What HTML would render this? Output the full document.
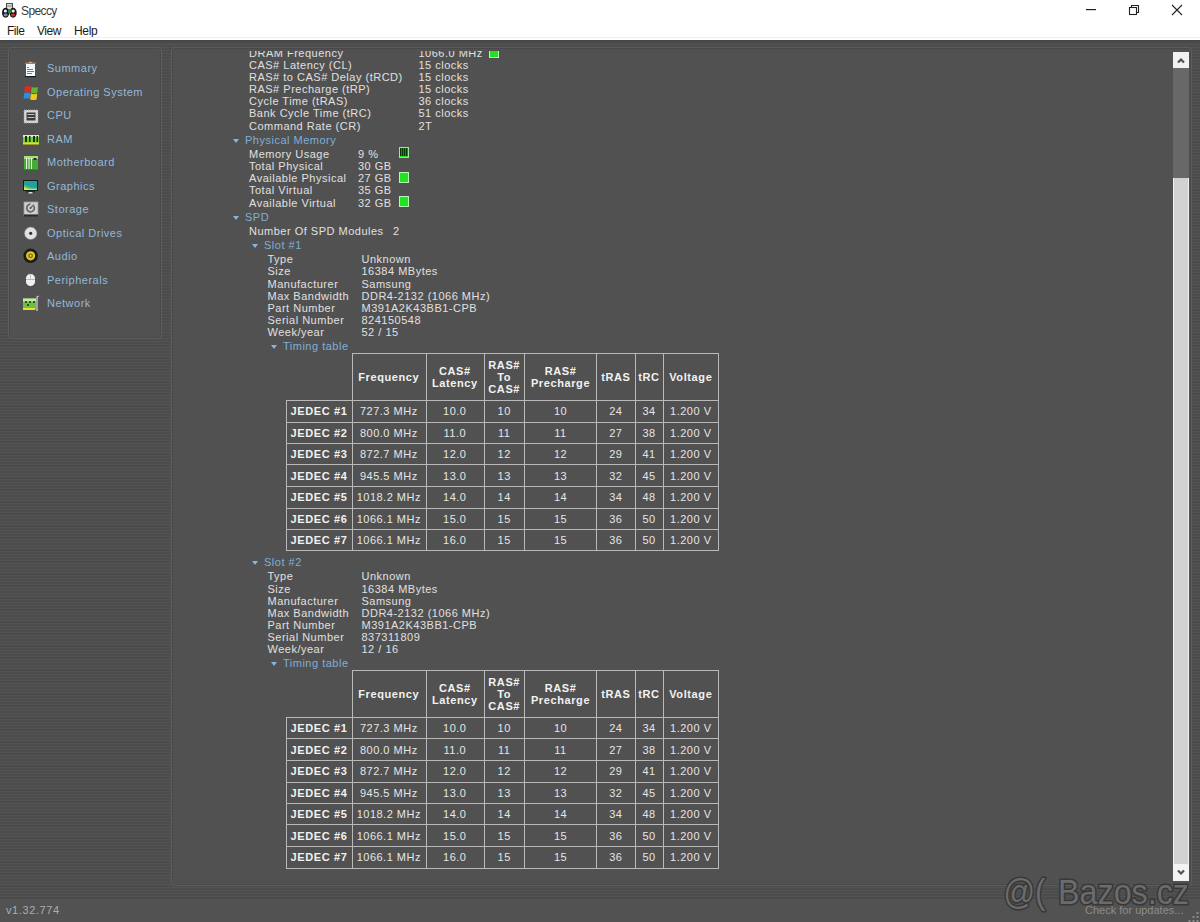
<!DOCTYPE html>
<html><head><meta charset="utf-8"><style>
*{margin:0;padding:0;box-sizing:border-box}
html,body{width:1200px;height:922px;overflow:hidden}
body{position:relative;font-family:"Liberation Sans", sans-serif;background:repeating-linear-gradient(180deg,#4c4c4c 0px,#4c4c4c 2px,#535353 2px,#535353 3px)}
.abs{position:absolute}
#title{position:absolute;left:0;top:0;width:1200px;height:40px;background:#fff}
#band{position:absolute;left:0;top:40px;width:1200px;height:2px;background:#474747}
.panel{position:absolute;background:#515151;border:1px solid #5d5d5d;border-radius:4px;box-shadow:inset 1px 1px 0 #494949, inset -1px -1px 0 #494949}
#clip{position:absolute;left:173px;top:51px;width:999px;height:832px;overflow:hidden}
#inner{position:absolute;left:-173px;top:-51px;width:1200px;height:922px}
.t,.h,.nv,.th,.td{position:absolute;font-size:11px;line-height:11px;white-space:nowrap;letter-spacing:0.5px}
.t{color:#e0e0e0}
.h{color:#80aed6}
.nv{color:#94b8d8;letter-spacing:0.5px}
.th{color:#f2f2f2;font-weight:bold;width:120px;text-align:center;letter-spacing:0.6px}
.td{color:#e6e6e6;width:120px;text-align:center}
.td.b{font-weight:bold;color:#f2f2f2;letter-spacing:0.6px}
.arr{position:absolute;width:0;height:0;border-left:3.5px solid transparent;border-right:3.5px solid transparent;border-top:4px solid #86b6de}
.gbox{position:absolute;width:10px;background:#22e322;border:1px solid #b8f5b8}
.gbox.u{background:repeating-linear-gradient(90deg,#063806 0,#063806 1px,#1a8a1a 1px,#1a8a1a 2px);border-color:#9de89d;box-shadow:inset 0 -1px 0 #22e322}
.tbl{position:absolute}
#status{position:absolute;left:0;top:898px;width:1200px;height:24px;background:#525252;border-top:1px solid #4a4a4a}
</style></head><body>
<div id="title"></div>
<div class="abs" style="left:21px;top:4px;font-size:12px;line-height:14px;color:#3a3a3a;letter-spacing:-0.6px">Speccy</div>
<div class="abs" style="left:7px;top:24px;font-size:12px;line-height:14px;color:#1a1a1a;letter-spacing:-0.5px">File</div>
<div class="abs" style="left:37px;top:24px;font-size:12px;line-height:14px;color:#1a1a1a;letter-spacing:-0.5px">View</div>
<div class="abs" style="left:74px;top:24px;font-size:12px;line-height:14px;color:#1a1a1a;letter-spacing:-0.3px">Help</div>
<svg class="abs" style="left:0;top:0" width="20" height="20" viewBox="0 0 20 20">
 <rect x="6.5" y="3.5" width="6" height="8" fill="#dcdcdc" stroke="#505050" stroke-width="1"/>
 <rect x="7" y="5.5" width="5" height="1" fill="#808080"/>
 <ellipse cx="5.6" cy="12.7" rx="3.6" ry="5" fill="#15151c"/>
 <ellipse cx="13.1" cy="12.7" rx="3.6" ry="5" fill="#1a1414"/>
 <ellipse cx="5.4" cy="11" rx="1.6" ry="1.6" fill="#e8eef8"/>
 <ellipse cx="5.6" cy="15" rx="2" ry="1.4" fill="#8090b8"/>
 <ellipse cx="13.2" cy="11" rx="1.6" ry="1.6" fill="#f0f0f0"/>
 <ellipse cx="13.1" cy="15" rx="2.2" ry="1.5" fill="#d02828"/>
 <rect x="8" y="9" width="3.5" height="4" fill="#3c7a3c"/>
</svg>
<svg class="abs" style="left:1080px;top:0" width="120" height="20">
 <rect x="6" y="9" width="10" height="1.2" fill="#222"/>
 <rect x="49.5" y="7.5" width="7" height="7" fill="none" stroke="#222" stroke-width="1.1"/>
 <path d="M51.5 7.5 V5.5 H58.5 V12.5 H56.5" fill="none" stroke="#222" stroke-width="1.1"/>
 <path d="M92 5 L102 15 M102 5 L92 15" stroke="#222" stroke-width="1.1"/>
</svg>
<div class="panel" style="left:8px;top:47px;width:154px;height:292px"></div>
<div class="panel" style="left:171px;top:47px;width:1021px;height:839px"></div>
<div class="nv" style="left:47px;top:63.2px">Summary</div><div class="nv" style="left:47px;top:86.7px">Operating System</div><div class="nv" style="left:47px;top:110.2px">CPU</div><div class="nv" style="left:47px;top:133.7px">RAM</div><div class="nv" style="left:47px;top:157.2px">Motherboard</div><div class="nv" style="left:47px;top:180.7px">Graphics</div><div class="nv" style="left:47px;top:204.2px">Storage</div><div class="nv" style="left:47px;top:227.7px">Optical Drives</div><div class="nv" style="left:47px;top:251.2px">Audio</div><div class="nv" style="left:47px;top:274.7px">Peripherals</div><div class="nv" style="left:47px;top:298.2px">Network</div>

<svg class="abs" style="left:0;top:0" width="45" height="320">
 <!-- summary clipboard -->
 <rect x="25.5" y="63.5" width="10" height="13" fill="#f4fbff" stroke="#6a4a30" stroke-width="1"/>
 <path d="M28 63 L30.5 61.5 L33 63 Z" fill="#e0e0e0"/>
 <rect x="25" y="62.5" width="11" height="1.5" fill="#b07a50"/>
 <rect x="27" y="67" width="2" height="1" fill="#3a8ad8"/>
 <rect x="27" y="69" width="6" height="1" fill="#3a8ad8"/>
 <rect x="27" y="71" width="7" height="1" fill="#3a8ad8"/>
 <rect x="27" y="73" width="5" height="1" fill="#3a8ad8"/>
 <rect x="25" y="76" width="11" height="1.2" fill="#1a1a1a"/>
 <!-- windows flag -->
 <path d="M25 86.5 Q27.5 85.3 30.8 86.6 L30.3 92.3 Q27.5 91.2 24.3 92.3 Z" fill="#e8281e"/>
 <path d="M31.6 87 Q34.5 88.2 38 87 L37.3 92.8 Q34.5 94 30.9 92.8 Z" fill="#5eb532"/>
 <path d="M24.2 93 Q27.3 91.9 30.2 93 L29.7 98.8 Q27 97.6 23.6 98.8 Z" fill="#2c8ee0"/>
 <path d="M30.8 93.6 Q34.3 94.8 37.2 93.6 L36.6 99.5 Q34 100.6 30.2 99.4 Z" fill="#f2c81e"/>
 <!-- cpu -->
 <rect x="24" y="110" width="14" height="13" fill="#d8d8d8"/>
 <rect x="24" y="110" width="14" height="13" fill="none" stroke="#9a9a9a" stroke-width="1" stroke-dasharray="1 1"/>
 <rect x="26.5" y="112.5" width="9" height="8" fill="#3a3a3a"/>
 <rect x="27.5" y="114" width="7" height="1" fill="#c0c0c0"/>
 <rect x="27.5" y="117" width="7" height="1" fill="#c0c0c0"/>
 <!-- ram -->
 <rect x="23" y="135" width="16" height="8" fill="#7acb3c"/>
 <rect x="23" y="135" width="16" height="2" fill="#d8efc0"/>
 <rect x="25" y="136" width="2" height="6" fill="#0c3a0c"/>
 <rect x="29" y="136" width="1.5" height="6" fill="#0c3a0c"/>
 <rect x="33" y="136" width="2" height="6" fill="#0c3a0c"/>
 <rect x="36.5" y="136" width="1.5" height="6" fill="#0c3a0c"/>
 <rect x="23" y="142.5" width="16" height="2" fill="#e8e010"/>
 <!-- motherboard -->
 <rect x="24" y="156" width="14" height="15" fill="#48a838"/>
 <rect x="24" y="156" width="14" height="3" fill="#a8dc88"/>
 <rect x="26" y="158" width="1" height="11" fill="#e8f8e0"/>
 <rect x="28.5" y="158" width="1" height="11" fill="#e8f8e0"/>
 <rect x="31" y="158" width="1" height="11" fill="#e8f8e0"/>
 <rect x="33.5" y="158" width="3" height="2" fill="#183818"/>
 <rect x="24" y="169.5" width="14" height="1.5" fill="#2a6a2a"/>
 <!-- graphics -->
 <rect x="23" y="180" width="15" height="11" fill="#102018"/>
 <rect x="24" y="181" width="13" height="9" fill="#22a0a0"/>
 <path d="M24 190 L24 186.5 Q28 189.5 37 188.5 L37 190 Z" fill="#d8e850"/><path d="M24 186.5 Q28 189.5 37 188.5 L37 187.5 Q30 188.5 24 184.5 Z" fill="#58c070"/>
 <rect x="26" y="191" width="9" height="1.5" fill="#2a2a2a"/><rect x="28.5" y="192" width="4" height="1.5" fill="#d8d8d8"/>
 <!-- storage -->
 <rect x="24" y="202" width="14" height="13" fill="#d0d0d0" stroke="#9a9a9a" stroke-width="0.8"/>
 <path d="M33.8 206 A3.8 3.8 0 1 1 30.5 204.2" fill="none" stroke="#6a6a6a" stroke-width="1.8"/><path d="M30.5 208 L34 204.5" stroke="#6a6a6a" stroke-width="1.2"/>
 <circle cx="30.5" cy="208" r="1" fill="#505050"/>
 <rect x="24" y="214.5" width="14" height="2" fill="#2a2a2a"/>
 <!-- optical -->
 <circle cx="30.7" cy="233.3" r="6.2" fill="#e4e0e4"/>
 <circle cx="30.7" cy="233.3" r="6.2" fill="none" stroke="#888" stroke-width="0.6"/>
 <circle cx="30.7" cy="233.3" r="1.6" fill="#303030"/>
 <!-- audio -->
 <circle cx="30.6" cy="255.8" r="7.2" fill="#1e1a14"/>
 <circle cx="30.6" cy="255.8" r="4.6" fill="#d8c820"/>
 <circle cx="30.6" cy="255.8" r="2.4" fill="#807010"/>
 <circle cx="30.6" cy="255.8" r="1" fill="#e8c8c0"/>
 <!-- peripherals mouse -->
 <rect x="25.5" y="273.5" width="10" height="13" rx="5" ry="5" fill="#f0f0f0" stroke="#3a3a3a" stroke-width="0.8"/>
 <rect x="26" y="279" width="9" height="1" fill="#b8b8b8"/>
 <path d="M30.5 274 V279" stroke="#b8b8b8" stroke-width="0.8"/>
 <!-- network -->
 <rect x="23" y="298.5" width="13" height="11" fill="#6cc040"/>
 <rect x="23" y="298.5" width="13" height="3" fill="#c8e8a8"/>
 <circle cx="26" cy="302" r="1.1" fill="#1a3a1a"/>
 <circle cx="30" cy="302" r="1.1" fill="#1a3a1a"/>
 <circle cx="34" cy="302" r="1.1" fill="#1a3a1a"/>
 <circle cx="28" cy="305" r="1.1" fill="#1a3a1a"/>
 <rect x="23" y="308" width="12" height="2" fill="#e8e030"/>
 <path d="M37 311 V297 L38.5 296" fill="none" stroke="#d8d8d8" stroke-width="1.2"/>
</svg>

<div id="clip"><div id="inner">
<div class="t" style="left:249px;top:48.2px">DRAM Frequency</div><div class="t" style="left:418.5px;top:48.2px">1066.0 MHz</div><div class="t" style="left:249px;top:59.9px">CAS# Latency (CL)</div><div class="t" style="left:418.5px;top:59.9px">15 clocks</div><div class="t" style="left:249px;top:72.1px">RAS# to CAS# Delay (tRCD)</div><div class="t" style="left:418.5px;top:72.1px">15 clocks</div><div class="t" style="left:249px;top:84.3px">RAS# Precharge (tRP)</div><div class="t" style="left:418.5px;top:84.3px">15 clocks</div><div class="t" style="left:249px;top:96.1px">Cycle Time (tRAS)</div><div class="t" style="left:418.5px;top:96.1px">36 clocks</div><div class="t" style="left:249px;top:108.3px">Bank Cycle Time (tRC)</div><div class="t" style="left:418.5px;top:108.3px">51 clocks</div><div class="t" style="left:249px;top:120.5px">Command Rate (CR)</div><div class="t" style="left:418.5px;top:120.5px">2T</div><div class="gbox" style="left:489px;top:47px;height:11px"></div><div class="arr" style="left:233px;top:138.5px"></div><div class="h" style="left:245px;top:135.2px">Physical Memory</div><div class="t" style="left:249px;top:148.8px">Memory Usage</div><div class="t" style="left:358px;top:148.8px">9 %</div><div class="t" style="left:249px;top:160.5px">Total Physical</div><div class="t" style="left:358px;top:160.5px">30 GB</div><div class="t" style="left:249px;top:172.9px">Available Physical</div><div class="t" style="left:358px;top:172.9px">27 GB</div><div class="t" style="left:249px;top:185.3px">Total Virtual</div><div class="t" style="left:358px;top:185.3px">35 GB</div><div class="t" style="left:249px;top:197.7px">Available Virtual</div><div class="t" style="left:358px;top:197.7px">32 GB</div><div class="gbox u" style="left:399px;top:147px;height:11px"></div><div class="gbox" style="left:399px;top:172px;height:11px"></div><div class="gbox" style="left:399px;top:196px;height:11px"></div><div class="arr" style="left:233px;top:215.5px"></div><div class="h" style="left:245px;top:212.0px">SPD</div><div class="t" style="left:249px;top:225.5px">Number Of SPD Modules</div><div class="t" style="left:393px;top:225.5px">2</div><div class="arr" style="left:252px;top:243.5px"></div><div class="h" style="left:264px;top:240.0px">Slot #1</div><div class="t" style="left:267.5px;top:254.3px">Type</div><div class="t" style="left:361.5px;top:254.3px">Unknown</div><div class="t" style="left:267.5px;top:266.4px">Size</div><div class="t" style="left:361.5px;top:266.4px">16384 MBytes</div><div class="t" style="left:267.5px;top:278.6px">Manufacturer</div><div class="t" style="left:361.5px;top:278.6px">Samsung</div><div class="t" style="left:267.5px;top:290.8px">Max Bandwidth</div><div class="t" style="left:361.5px;top:290.8px">DDR4-2132 (1066 MHz)</div><div class="t" style="left:267.5px;top:302.9px">Part Number</div><div class="t" style="left:361.5px;top:302.9px">M391A2K43BB1-CPB</div><div class="t" style="left:267.5px;top:315.1px">Serial Number</div><div class="t" style="left:361.5px;top:315.1px">824150548</div><div class="t" style="left:267.5px;top:327.2px">Week/year</div><div class="t" style="left:361.5px;top:327.2px">52 / 15</div><div class="arr" style="left:271px;top:344.5px"></div><div class="h" style="left:283px;top:340.9px">Timing table</div><svg class="tbl" style="left:0;top:0" width="1200" height="922"><g fill="#b9b9b9"><rect x="352" y="353" width="367" height="1"/><rect x="286" y="400" width="433" height="1"/><rect x="286" y="422" width="433" height="1"/><rect x="286" y="443" width="433" height="1"/><rect x="286" y="464" width="433" height="1"/><rect x="286" y="486" width="433" height="1"/><rect x="286" y="508" width="433" height="1"/><rect x="286" y="529" width="433" height="1"/><rect x="286" y="550" width="433" height="1"/><rect x="286" y="400" width="1" height="151"/><rect x="352" y="353" width="1" height="198"/><rect x="426" y="353" width="1" height="198"/><rect x="484" y="353" width="1" height="198"/><rect x="524" y="353" width="1" height="198"/><rect x="596" y="353" width="1" height="198"/><rect x="635" y="353" width="1" height="198"/><rect x="663" y="353" width="1" height="198"/><rect x="718" y="353" width="1" height="198"/></g></svg><div class="th" style="left:328.8px;top:372.0px">Frequency</div><div class="th" style="left:394.8px;top:366.1px">CAS#</div><div class="th" style="left:394.8px;top:377.9px">Latency</div><div class="th" style="left:444.2px;top:360.2px">RAS#</div><div class="th" style="left:444.2px;top:372.0px">To</div><div class="th" style="left:444.2px;top:383.8px">CAS#</div><div class="th" style="left:500.5px;top:366.1px">RAS#</div><div class="th" style="left:500.5px;top:377.9px">Precharge</div><div class="th" style="left:555.8px;top:372.0px">tRAS</div><div class="th" style="left:589.0px;top:372.0px">tRC</div><div class="th" style="left:630.8px;top:372.0px">Voltage</div><div class="td b" style="left:259.0px;top:406.0px">JEDEC #1</div><div class="td" style="left:328.8px;top:406.0px">727.3 MHz</div><div class="td" style="left:394.8px;top:406.0px">10.0</div><div class="td" style="left:444.2px;top:406.0px">10</div><div class="td" style="left:500.5px;top:406.0px">10</div><div class="td" style="left:555.8px;top:406.0px">24</div><div class="td" style="left:589.0px;top:406.0px">34</div><div class="td" style="left:630.8px;top:406.0px">1.200 V</div><div class="td b" style="left:259.0px;top:427.5px">JEDEC #2</div><div class="td" style="left:328.8px;top:427.5px">800.0 MHz</div><div class="td" style="left:394.8px;top:427.5px">11.0</div><div class="td" style="left:444.2px;top:427.5px">11</div><div class="td" style="left:500.5px;top:427.5px">11</div><div class="td" style="left:555.8px;top:427.5px">27</div><div class="td" style="left:589.0px;top:427.5px">38</div><div class="td" style="left:630.8px;top:427.5px">1.200 V</div><div class="td b" style="left:259.0px;top:449.0px">JEDEC #3</div><div class="td" style="left:328.8px;top:449.0px">872.7 MHz</div><div class="td" style="left:394.8px;top:449.0px">12.0</div><div class="td" style="left:444.2px;top:449.0px">12</div><div class="td" style="left:500.5px;top:449.0px">12</div><div class="td" style="left:555.8px;top:449.0px">29</div><div class="td" style="left:589.0px;top:449.0px">41</div><div class="td" style="left:630.8px;top:449.0px">1.200 V</div><div class="td b" style="left:259.0px;top:470.5px">JEDEC #4</div><div class="td" style="left:328.8px;top:470.5px">945.5 MHz</div><div class="td" style="left:394.8px;top:470.5px">13.0</div><div class="td" style="left:444.2px;top:470.5px">13</div><div class="td" style="left:500.5px;top:470.5px">13</div><div class="td" style="left:555.8px;top:470.5px">32</div><div class="td" style="left:589.0px;top:470.5px">45</div><div class="td" style="left:630.8px;top:470.5px">1.200 V</div><div class="td b" style="left:259.0px;top:492.0px">JEDEC #5</div><div class="td" style="left:328.8px;top:492.0px">1018.2 MHz</div><div class="td" style="left:394.8px;top:492.0px">14.0</div><div class="td" style="left:444.2px;top:492.0px">14</div><div class="td" style="left:500.5px;top:492.0px">14</div><div class="td" style="left:555.8px;top:492.0px">34</div><div class="td" style="left:589.0px;top:492.0px">48</div><div class="td" style="left:630.8px;top:492.0px">1.200 V</div><div class="td b" style="left:259.0px;top:513.5px">JEDEC #6</div><div class="td" style="left:328.8px;top:513.5px">1066.1 MHz</div><div class="td" style="left:394.8px;top:513.5px">15.0</div><div class="td" style="left:444.2px;top:513.5px">15</div><div class="td" style="left:500.5px;top:513.5px">15</div><div class="td" style="left:555.8px;top:513.5px">36</div><div class="td" style="left:589.0px;top:513.5px">50</div><div class="td" style="left:630.8px;top:513.5px">1.200 V</div><div class="td b" style="left:259.0px;top:535.0px">JEDEC #7</div><div class="td" style="left:328.8px;top:535.0px">1066.1 MHz</div><div class="td" style="left:394.8px;top:535.0px">16.0</div><div class="td" style="left:444.2px;top:535.0px">15</div><div class="td" style="left:500.5px;top:535.0px">15</div><div class="td" style="left:555.8px;top:535.0px">36</div><div class="td" style="left:589.0px;top:535.0px">50</div><div class="td" style="left:630.8px;top:535.0px">1.200 V</div><div class="arr" style="left:252px;top:560.5px"></div><div class="h" style="left:264px;top:557.0px">Slot #2</div><div class="t" style="left:267.5px;top:571.3px">Type</div><div class="t" style="left:361.5px;top:571.3px">Unknown</div><div class="t" style="left:267.5px;top:583.5px">Size</div><div class="t" style="left:361.5px;top:583.5px">16384 MBytes</div><div class="t" style="left:267.5px;top:595.6px">Manufacturer</div><div class="t" style="left:361.5px;top:595.6px">Samsung</div><div class="t" style="left:267.5px;top:607.8px">Max Bandwidth</div><div class="t" style="left:361.5px;top:607.8px">DDR4-2132 (1066 MHz)</div><div class="t" style="left:267.5px;top:619.9px">Part Number</div><div class="t" style="left:361.5px;top:619.9px">M391A2K43BB1-CPB</div><div class="t" style="left:267.5px;top:632.0px">Serial Number</div><div class="t" style="left:361.5px;top:632.0px">837311809</div><div class="t" style="left:267.5px;top:644.2px">Week/year</div><div class="t" style="left:361.5px;top:644.2px">12 / 16</div><div class="arr" style="left:271px;top:661.5px"></div><div class="h" style="left:283px;top:657.9px">Timing table</div><svg class="tbl" style="left:0;top:0" width="1200" height="922"><g fill="#b9b9b9"><rect x="352" y="670" width="367" height="1"/><rect x="286" y="717" width="433" height="1"/><rect x="286" y="738" width="433" height="1"/><rect x="286" y="760" width="433" height="1"/><rect x="286" y="782" width="433" height="1"/><rect x="286" y="803" width="433" height="1"/><rect x="286" y="824" width="433" height="1"/><rect x="286" y="846" width="433" height="1"/><rect x="286" y="868" width="433" height="1"/><rect x="286" y="717" width="1" height="152"/><rect x="352" y="670" width="1" height="199"/><rect x="426" y="670" width="1" height="199"/><rect x="484" y="670" width="1" height="199"/><rect x="524" y="670" width="1" height="199"/><rect x="596" y="670" width="1" height="199"/><rect x="635" y="670" width="1" height="199"/><rect x="663" y="670" width="1" height="199"/><rect x="718" y="670" width="1" height="199"/></g></svg><div class="th" style="left:328.8px;top:689.0px">Frequency</div><div class="th" style="left:394.8px;top:683.1px">CAS#</div><div class="th" style="left:394.8px;top:694.9px">Latency</div><div class="th" style="left:444.2px;top:677.2px">RAS#</div><div class="th" style="left:444.2px;top:689.0px">To</div><div class="th" style="left:444.2px;top:700.8px">CAS#</div><div class="th" style="left:500.5px;top:683.1px">RAS#</div><div class="th" style="left:500.5px;top:694.9px">Precharge</div><div class="th" style="left:555.8px;top:689.0px">tRAS</div><div class="th" style="left:589.0px;top:689.0px">tRC</div><div class="th" style="left:630.8px;top:689.0px">Voltage</div><div class="td b" style="left:259.0px;top:723.0px">JEDEC #1</div><div class="td" style="left:328.8px;top:723.0px">727.3 MHz</div><div class="td" style="left:394.8px;top:723.0px">10.0</div><div class="td" style="left:444.2px;top:723.0px">10</div><div class="td" style="left:500.5px;top:723.0px">10</div><div class="td" style="left:555.8px;top:723.0px">24</div><div class="td" style="left:589.0px;top:723.0px">34</div><div class="td" style="left:630.8px;top:723.0px">1.200 V</div><div class="td b" style="left:259.0px;top:744.5px">JEDEC #2</div><div class="td" style="left:328.8px;top:744.5px">800.0 MHz</div><div class="td" style="left:394.8px;top:744.5px">11.0</div><div class="td" style="left:444.2px;top:744.5px">11</div><div class="td" style="left:500.5px;top:744.5px">11</div><div class="td" style="left:555.8px;top:744.5px">27</div><div class="td" style="left:589.0px;top:744.5px">38</div><div class="td" style="left:630.8px;top:744.5px">1.200 V</div><div class="td b" style="left:259.0px;top:766.0px">JEDEC #3</div><div class="td" style="left:328.8px;top:766.0px">872.7 MHz</div><div class="td" style="left:394.8px;top:766.0px">12.0</div><div class="td" style="left:444.2px;top:766.0px">12</div><div class="td" style="left:500.5px;top:766.0px">12</div><div class="td" style="left:555.8px;top:766.0px">29</div><div class="td" style="left:589.0px;top:766.0px">41</div><div class="td" style="left:630.8px;top:766.0px">1.200 V</div><div class="td b" style="left:259.0px;top:787.5px">JEDEC #4</div><div class="td" style="left:328.8px;top:787.5px">945.5 MHz</div><div class="td" style="left:394.8px;top:787.5px">13.0</div><div class="td" style="left:444.2px;top:787.5px">13</div><div class="td" style="left:500.5px;top:787.5px">13</div><div class="td" style="left:555.8px;top:787.5px">32</div><div class="td" style="left:589.0px;top:787.5px">45</div><div class="td" style="left:630.8px;top:787.5px">1.200 V</div><div class="td b" style="left:259.0px;top:809.0px">JEDEC #5</div><div class="td" style="left:328.8px;top:809.0px">1018.2 MHz</div><div class="td" style="left:394.8px;top:809.0px">14.0</div><div class="td" style="left:444.2px;top:809.0px">14</div><div class="td" style="left:500.5px;top:809.0px">14</div><div class="td" style="left:555.8px;top:809.0px">34</div><div class="td" style="left:589.0px;top:809.0px">48</div><div class="td" style="left:630.8px;top:809.0px">1.200 V</div><div class="td b" style="left:259.0px;top:830.5px">JEDEC #6</div><div class="td" style="left:328.8px;top:830.5px">1066.1 MHz</div><div class="td" style="left:394.8px;top:830.5px">15.0</div><div class="td" style="left:444.2px;top:830.5px">15</div><div class="td" style="left:500.5px;top:830.5px">15</div><div class="td" style="left:555.8px;top:830.5px">36</div><div class="td" style="left:589.0px;top:830.5px">50</div><div class="td" style="left:630.8px;top:830.5px">1.200 V</div><div class="td b" style="left:259.0px;top:852.0px">JEDEC #7</div><div class="td" style="left:328.8px;top:852.0px">1066.1 MHz</div><div class="td" style="left:394.8px;top:852.0px">16.0</div><div class="td" style="left:444.2px;top:852.0px">15</div><div class="td" style="left:500.5px;top:852.0px">15</div><div class="td" style="left:555.8px;top:852.0px">36</div><div class="td" style="left:589.0px;top:852.0px">50</div><div class="td" style="left:630.8px;top:852.0px">1.200 V</div>
</div></div>
<!-- scrollbar -->
<div class="abs" style="left:1173px;top:52px;width:16px;height:829px;background:#686868"></div>
<div class="abs" style="left:1173px;top:52px;width:16px;height:16px;background:#f2f2f2"></div>
<svg class="abs" style="left:1173px;top:52px" width="16" height="16"><path d="M5 10.5 L8 7.5 L11 10.5" fill="none" stroke="#505050" stroke-width="2.2"/></svg>
<div class="abs" style="left:1173px;top:178px;width:16px;height:687px;background:#d2d2d2;border-left:1px solid #f0f0f0;border-right:1px solid #f0f0f0"></div>
<div class="abs" style="left:1173px;top:864px;width:16px;height:17px;background:#f2f2f2"></div>
<svg class="abs" style="left:1173px;top:864px" width="16" height="17"><path d="M5 6.5 L8 9.5 L11 6.5" fill="none" stroke="#505050" stroke-width="2.2"/></svg>

<div id="band"></div><div class="abs" style="left:0;top:37px;width:1200px;height:1px;background:#f0f0f0"></div>
<div id="status"></div>
<div class="abs" style="left:6px;top:905px;font-size:11px;line-height:11px;color:#acacac;letter-spacing:0.6px">v1.32.774</div>
<svg class="abs" style="left:990px;top:860px" width="210" height="62"><g font-family="Liberation Sans, sans-serif" fill="#6b6b6b" stroke="#383838" stroke-width="3.2" paint-order="stroke" stroke-linejoin="round">
<text x="13.5" y="43.5" font-size="35" textLength="42" lengthAdjust="spacingAndGlyphs">@(</text>
<text x="68" y="43.5" font-size="35" textLength="131" lengthAdjust="spacingAndGlyphs">Bazos.cz</text></g></svg>
<svg class="abs" style="left:1185px;top:908px" width="15" height="14"><g fill="#8a8a8a"><rect x="11.5" y="4" width="2" height="2"/><rect x="7.5" y="8" width="2" height="2"/><rect x="11.5" y="8" width="2" height="2"/><rect x="3.5" y="12" width="2" height="2"/><rect x="7.5" y="12" width="2" height="2"/><rect x="11.5" y="12" width="2" height="2"/></g></svg>
<div class="abs" style="left:1085px;top:904px;font-size:11px;line-height:12px;color:#8c8c8c">Check for updates...</div>

</body></html>
